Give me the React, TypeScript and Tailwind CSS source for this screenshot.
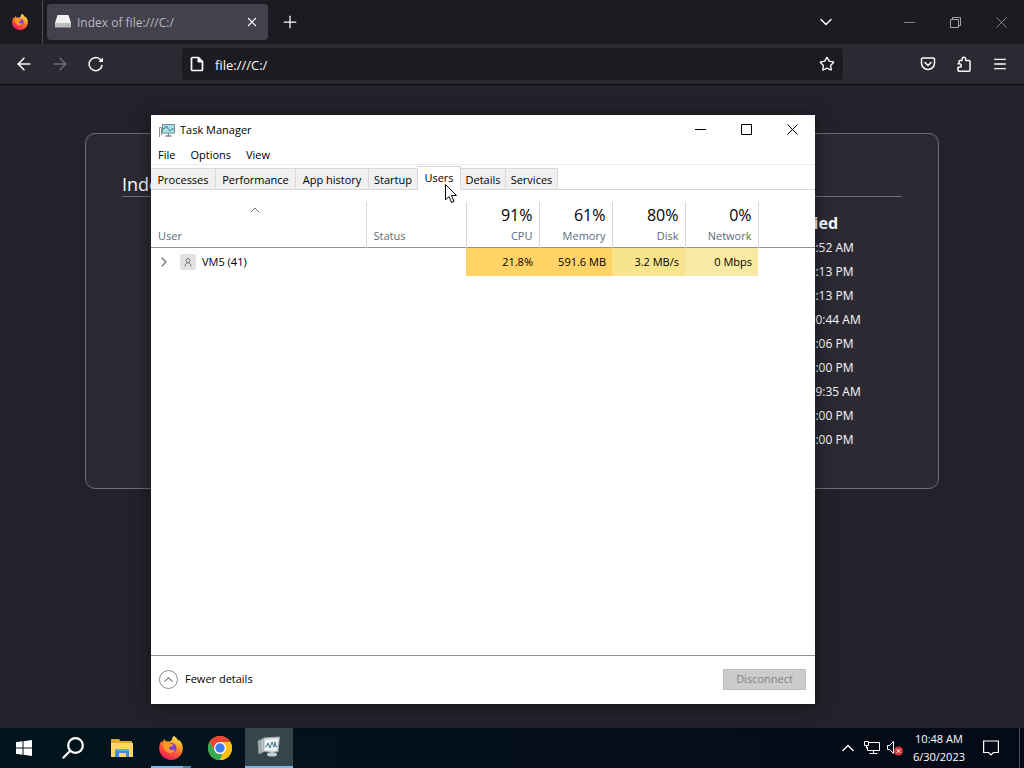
import React from 'react'
import { ArrowLeft, ArrowRight, Plus, ChevronDown, ChevronUp, ChevronRight, Star, Menu } from 'lucide-react'

const times = [
  '3:52 AM',
  '7:13 PM',
  '7:13 PM',
  '00:44 AM',
  '5:06 PM',
  '0:00 PM',
  '19:35 AM',
  '0:00 PM',
  '0:00 PM',
]

const tabs = [
  { name: 'Processes', className: 'w-[65px]' },
  { name: 'Performance', className: 'w-20' },
  { name: 'App history', className: 'w-[73px]' },
  { name: 'Startup', className: 'w-[49px]' },
  { name: 'Users', className: 'w-[43px]' },
  { name: 'Details', className: 'w-[45px]' },
  { name: 'Services', className: 'w-[52px]' },
]

const meters = [
  { name: 'CPU', total: '91%', value: '21.8%', className: 'bg-[#ffd366]' },
  { name: 'Memory', total: '61%', value: '591.6 MB', className: 'bg-[#ffd366]' },
  { name: 'Disk', total: '80%', value: '3.2 MB/s', className: 'bg-[#f9e48e]' },
  { name: 'Network', total: '0%', value: '0 Mbps', className: 'bg-[#f8eaa5]' },
]

function FirefoxLogo({ className }: { className?: string }) {
  return (
    <svg viewBox="0 0 24 24" className={className} aria-hidden="true">
      <defs>
        <linearGradient id="fox" x1="0.8" y1="0" x2="0.3" y2="1">
          <stop offset="0" stopColor="#fff04a" />
          <stop offset="0.35" stopColor="#ffa326" />
          <stop offset="0.65" stopColor="#ff5238" />
          <stop offset="1" stopColor="#e5195e" />
        </linearGradient>
      </defs>
      <path
        fill="url(#fox)"
        d="M15 0c2 1 3.600 3 4.300 5 .4-.3.500-.8.500-1.200C22.500 6 24 9.300 23.800 13c-.4 6.300-5.500 11-11.800 11S.3 19 .2 12.800C.1 9.500 1 7 2.700 5c0 .7.100 1.200.4 1.700C4 5 4.800 3.800 6 3c0 1 .3 1.800.8 2.500C8 5.200 9.500 5.200 10.500 5.700 12 5 12.800 4 13 3c.2-1.200.9-2.300 2-3z"
      />
      <circle cx="12.500" cy="12" r="5" fill="#7a42d8" />
      <path fill="#ff9a1f" d="M4 8c2-1.500 5-1.800 7-.5 1.500.8 2.500 1 3.500 1-.5 1.700-2 1.900-3.500 2.500-1.300.5-1 2.500.5 3 1.700.6 3-.5 4.300 0-1 2.500-3.300 3.500-5.800 3C6.500 16.300 4.500 12.500 4 8z" />
    </svg>
  )
}

function ChromeLogo() {
  return (
    <svg viewBox="0 0 24 24" className="size-6" aria-hidden="true">
      <circle cx="12" cy="12" r="12" fill="#fbc116" />
      <path fill="#ea4335" d="M1.600 6A12 12 0 0 1 22.400 6H12L6.800 15z" />
      <path fill="#34a853" d="M1.600 6l5.200 9a6 6 0 0 0 7.500 2.500L12 24A12 12 0 0 1 1.600 6z" />
      <path fill="#fbc116" d="M12 6h10.400A12 12 0 0 1 12 24l5.200-9z" />
      <circle cx="12" cy="12" r="6" fill="#fff" />
      <circle cx="12" cy="12" r="4.700" fill="#3b7ded" />
    </svg>
  )
}

function FolderIcon() {
  return (
    <svg viewBox="0 0 22 18" className="h-[18px] w-[22px]" aria-hidden="true">
      <path d="M0 0h8l1.500 2H21v16H0z" fill="#e3a92e" />
      <path d="M0 4h22v14H0z" fill="#ffd766" />
      <path d="M4 10h14v8h-3v-4H8v4H4z" fill="#3f8fc9" />
      <path d="M4 10h14v2H4z" fill="#62aede" />
    </svg>
  )
}

function MonitorIcon() {
  return (
    <svg viewBox="0 0 16 16" className="size-4" fill="none" aria-hidden="true">
      <path d="M.5 15V5.500h2M2.500 6v7" stroke="#8b9294" />
      <rect x="3.500" y="2.500" width="12" height="8.500" fill="#a9e3ec" stroke="#7c898c" />
      <path d="M4 7l2-1 1.500-2 2 3.500L11 9l2-2.500 2 1" stroke="#32727f" />
      <path d="M9.500 11v2.500M6.500 14h6" stroke="#858d90" strokeWidth="1.500" />
    </svg>
  )
}

function TaskManagerIcon() {
  return (
    <svg viewBox="0 0 24 24" className="size-6" fill="none" aria-hidden="true">
      <path d="M1 6l5-2v13l-4 2z" fill="#a9b1b4" stroke="#8f999d" />
      <path d="M4 4.500l3-1v13l-3 1z" fill="#c3cacd" stroke="#8f999d" />
      <path d="M7 3l15.500-1L21 16.500l-6 1L6 16z" fill="#d8dfe1" stroke="#a2abae" />
      <path d="M8 5l13-1-1 11-12 .5z" fill="#edf3f4" />
      <path d="M8 12l2-1 1-3 2 5 2-6 2 5 1-5 1 5 1.500-1" stroke="#447e94" />
      <ellipse cx="15" cy="19.500" rx="5" ry="2" fill="#c8cfd0" />
    </svg>
  )
}

function WindowControl({ kind, className = '' }: { kind: 'Minimize' | 'Maximize' | 'Restore' | 'Close'; className?: string }) {
  return (
    <button aria-label={kind} className={`flex w-[46px] justify-center ${className}`}>
      <svg viewBox="0 0 11 11" className="size-[11px]" fill="none" stroke="currentColor" aria-hidden="true">
        {kind === 'Minimize' && <path d="M0 5.500h11" />}
        {kind === 'Maximize' && <path d="M.5.500h10v10H.5z" />}
        {kind === 'Restore' && <path d="M.5 2.500h8v8h-8zM2.500 2.500v-2h8v8h-2" />}
        {kind === 'Close' && <path d="M.5.500l10 10M10.500.500l-10 10" />}
      </svg>
    </button>
  )
}

function BrowserHeader() {
  return (
    <header className="text-[#fbfbfe]">
      <div className="flex h-11 items-center bg-[#1c1b22]">
        <div className="flex h-11 w-[43px] items-center border-r border-[#4c4b55] pl-3">
          <FirefoxLogo className="size-4" />
        </div>
        <div className="ml-1 flex h-9 w-[221px] items-center rounded bg-[#42414d] px-2">
          <svg viewBox="0 0 16 16" className="size-4" aria-hidden="true">
            <path d="M2.500 1h11L16 9H0z" fill="#f1f1f3" />
            <path d="M0 9h16v4.500H0z" fill="#bcbcc1" />
            <path d="M12 11.500h2" stroke="#65c174" />
          </svg>
          <span className="ml-[6px] flex-1 pt-0.5 text-xs text-[#bab9c2]">Index of file:///C:/</span>
          <button aria-label="Close tab" className="mr-1">
            <svg viewBox="0 0 8 8" className="size-2 overflow-visible" stroke="currentColor" strokeWidth="1.200" aria-hidden="true">
              <path d="M0 0l8 8M8 0L0 8" />
            </svg>
          </button>
        </div>
        <button aria-label="New tab" className="ml-3"><Plus className="size-5" strokeWidth={1.5} /></button>
        <div className="ml-auto flex items-center">
          <button aria-label="List all tabs" className="mr-[50px]"><ChevronDown className="size-5" strokeWidth={1.8} /></button>
          <WindowControl kind="Minimize" className="text-[#85848b]" />
          <WindowControl kind="Restore" className="text-[#a3a2a8]" />
          <WindowControl kind="Close" className="text-[#85848b]" />
        </div>
      </div>
      <div className="flex h-[41px] items-center border-b border-[#0c0c0d] bg-[#2b2a33] pr-4 pl-[14px]">
        <button aria-label="Back"><ArrowLeft className="size-5" strokeWidth={1.8} /></button>
        <button aria-label="Forward" className="ml-4 text-[#6d6c74]"><ArrowRight className="size-5" strokeWidth={1.8} /></button>
        <button aria-label="Reload" className="ml-[18px]">
          <svg viewBox="0 0 16 16" className="size-4" fill="none" stroke="currentColor" strokeWidth="1.500" strokeLinecap="round" aria-hidden="true">
            <path d="M14 9.500A6.500 6.500 0 1 1 12 3.300l1.500 1.500" />
            <path d="M15 1.500V6h-4.500z" fill="currentColor" stroke="none" />
          </svg>
        </button>
        <div className="mr-[77px] ml-[78px] flex h-8 flex-1 items-center rounded bg-[#1c1b22] px-2">
          <svg viewBox="0 0 14 16" className="h-4 w-[14px]" fill="none" stroke="currentColor" strokeWidth="1.700" strokeLinejoin="round" aria-hidden="true">
            <path d="M2.500 1.500h6l4 4v8a1 1 0 0 1-1 1h-9a1 1 0 0 1-1-1v-11a1 1 0 0 1 1-1z" />
            <path d="M8 1.500v4.500h4.500z" fill="currentColor" strokeWidth="1" />
          </svg>
          <input aria-label="Address" className="ml-[11px] min-w-0 flex-1 bg-transparent pt-1 text-[13px] outline-none" defaultValue="file:///C:/" />
          <button aria-label="Bookmark"><Star className="size-4 overflow-visible" strokeWidth={2} /></button>
        </div>
        <button aria-label="Pocket">
          <svg viewBox="0 0 16 16" className="size-4" fill="none" stroke="currentColor" strokeWidth="1.500" strokeLinecap="round" aria-hidden="true">
            <path d="M1.500 3a1 1 0 0 1 1-1h11a1 1 0 0 1 1 1v4a6.500 6.500 0 0 1-13 0z" />
            <path d="M5 6.500l3 3 3-3" />
          </svg>
        </button>
        <button aria-label="Extensions" className="ml-5">
          <svg viewBox="0 0 16 16" className="size-4" fill="none" stroke="currentColor" strokeWidth="1.500" strokeLinejoin="round" aria-hidden="true">
            <path d="M3 15.200h10a1 1 0 0 0 1-1V5.500a1 1 0 0 0-1-1H9.700V2.800a1.900 1.900 0 0 0-3.700 0v1.700H4a1 1 0 0 0-1 1v2.200H1.500M1.500 7.700h2a1.700 1.700 0 0 1 0 3.500H2v3a1 1 0 0 0 1 1" />
          </svg>
        </button>
        <button aria-label="Menu" className="ml-5"><Menu className="size-4 overflow-visible" strokeWidth={2} /></button>
      </div>
    </header>
  )
}

function DirectoryPage() {
  return (
    <main className="flex-1 px-[85px] pt-12 text-[#fbfbfe]">
      <div className="rounded-[10px] border border-[#6f6e78] bg-[#2b2a33] px-9 pt-10 pb-[37px]">
        <h1 className="border-b border-[#6f6e78] pb-0.5 text-lg leading-5">Index of file:///C:/</h1>
        <table className="mt-[14px] ml-auto text-xs">
          <thead>
            <tr>
              <th className="h-6 pr-16 text-right text-base leading-6">Last Modified</th>
            </tr>
          </thead>
          <tbody>
            {times.map((time, i) => (
              <tr key={i}>
                <td className="h-6 pt-px pl-[79px]">{time}</td>
              </tr>
            ))}
          </tbody>
        </table>
      </div>
    </main>
  )
}

function TaskManager() {
  const [active, setActive] = React.useState('Users')

  return (
    <section className="absolute top-[115px] left-[151px] flex h-[589px] w-[664px] flex-col bg-white text-[11px] text-black shadow-[0_2px_16px_rgba(0,0,0,0.5)]">
      <div className="flex h-[29px] items-center pl-2">
        <MonitorIcon />
        <h2 className="ml-[5px] flex-1 pt-0.5">Task Manager</h2>
        <WindowControl kind="Minimize" />
        <WindowControl kind="Maximize" />
        <WindowControl kind="Close" />
      </div>
      <nav className="flex h-[21px] items-center gap-[15px] border-b border-[#ececec] pt-0.5 pl-[7px]">
        <button>File</button>
        <button>Options</button>
        <button>View</button>
      </nav>
      <div className="flex h-[25px] items-end border-b border-[#d9d9d9]">
        {tabs.map((tab) => (
          <button
            key={tab.name}
            onClick={() => setActive(tab.name)}
            className={`flex items-center justify-center border-t border-r border-[#d9d9d9] whitespace-nowrap ${tab.className} ${
              active === tab.name ? '-mb-px h-6 bg-white' : 'h-[21px] bg-[#f0f0f0] pt-0.5'
            }`}
          >
            {tab.name}
          </button>
        ))}
      </div>
      <table className="mt-3 w-full table-fixed border-collapse">
        <thead>
          <tr className="h-11 border-b border-[#8f9395] leading-5 text-[#5b6b7b]">
            <th className="w-[215px] border-r border-[#d5d9dc] pr-[14px] pb-px pl-[7px] text-left align-bottom font-normal">
              <ChevronUp className="mx-auto mb-2 size-4 text-[#777]" strokeWidth={1.5} />
              User
            </th>
            <th className="w-[100px] border-r border-[#d5d9dc] pb-px pl-[7px] text-left align-bottom font-normal">Status</th>
            {meters.map((m) => (
              <th key={m.name} className="w-[73px] border-r border-[#d5d9dc] pr-[6px] pb-px text-right align-bottom font-normal">
                <span className="block text-base leading-[21px] text-black">{m.total}</span>
                {m.name}
              </th>
            ))}
            <th />
          </tr>
        </thead>
        <tbody>
          <tr className="h-7">
            <td>
              <div className="flex items-center pl-[5px]">
                <ChevronRight className="size-4 text-[#777]" strokeWidth={2} />
                <svg viewBox="0 0 16 16" className="mx-2 size-4" fill="none" stroke="#777" aria-hidden="true">
                  <rect width="16" height="16" rx="1" fill="#e2e2e2" stroke="none" />
                  <circle cx="8" cy="6.500" r="2" />
                  <path d="M5 12.500c0-5 6-5 6 0" />
                </svg>
                <span className="-ml-0.5">VM5 (41)</span>
              </div>
            </td>
            <td />
            {meters.map((m) => (
              <td key={m.name} className={`pr-[6px] text-right ${m.className}`}>{m.value}</td>
            ))}
            <td />
          </tr>
        </tbody>
      </table>
      <footer className="mt-auto flex h-[49px] items-center border-t border-[#8f9395] pr-[9px] pb-px pl-2">
        <button className="flex items-center gap-[7px]">
          <ChevronUp className="size-[19px] rounded-full border border-[#8b8b8b] p-px text-[#777]" strokeWidth={1.8} />
          Fewer details
        </button>
        <button disabled className="ml-auto h-[21px] w-[83px] border border-[#bfbfbf] bg-[#cccccc] text-[#838383]">Disconnect</button>
      </footer>
    </section>
  )
}

function Cursor() {
  return (
    <svg viewBox="0 0 12 20" className="absolute top-[184px] left-[445px] h-5 w-3 overflow-visible" fill="#fff" stroke="#000" aria-hidden="true">
      <path d="M.5.500v15.500l3.500-3.500 2.500 6 2.500-1-2.500-6h5z" />
    </svg>
  )
}

function TaskbarButton({ label, className = '', children }: { label: string; className?: string; children: React.ReactNode }) {
  return (
    <button aria-label={label} className={`flex h-10 w-12 items-center justify-center ${className}`}>
      {children}
    </button>
  )
}

function Taskbar() {
  return (
    <footer className="flex h-10 items-center bg-linear-to-r from-[#02151c] to-[#050a17] text-white">
      <div className="flex gap-px">
        <TaskbarButton label="Start">
          <svg viewBox="0 0 16 16" className="size-4" fill="currentColor" aria-hidden="true">
            <path d="M0 2.200l6.500-.9v6.200H0zM7.500 1.200L16 0v7.500H7.500zM0 8.500h6.500v6.200L0 13.800zM7.500 8.500H16V16l-8.500-1.200z" />
          </svg>
        </TaskbarButton>
        <TaskbarButton label="Search">
          <svg viewBox="0 0 22 22" className="size-[22px]" fill="none" stroke="currentColor" strokeWidth="2.200" aria-hidden="true">
            <circle cx="13.500" cy="8.500" r="7.300" />
            <path d="M8.500 13.500L.8 21.200" />
          </svg>
        </TaskbarButton>
        <TaskbarButton label="File Explorer"><FolderIcon /></TaskbarButton>
        <TaskbarButton label="Firefox" className="relative">
          <FirefoxLogo className="size-6" />
          <span className="absolute inset-x-1 bottom-0 h-0.5 border-r-8 border-[#4f7ea3] bg-[#76b9ed]" />
        </TaskbarButton>
        <TaskbarButton label="Chrome"><ChromeLogo /></TaskbarButton>
        <TaskbarButton label="Task Manager" className="border-b-2 border-[#76b9ed] bg-[#35454c]"><TaskManagerIcon /></TaskbarButton>
      </div>
      <div className="ml-auto flex items-center">
        <button aria-label="Show hidden icons">
          <svg viewBox="0 0 12 8" className="h-2 w-3" fill="none" stroke="currentColor" strokeWidth="1.300" aria-hidden="true">
            <path d="M.5 7L6 1.500 11.500 7" />
          </svg>
        </button>
        <button aria-label="Network" className="ml-[10px]">
          <svg viewBox="0 0 16 14" className="h-[14px] w-4" fill="none" stroke="currentColor" aria-hidden="true">
            <path d="M5 1.500h10.500v8H3.500V6M9.500 9.500v3M5.500 12.500h8" />
            <path d="M.5.500h4v4h-4zM2.500 4.500v3" />
          </svg>
        </button>
        <button aria-label="Volume" className="ml-[7px]">
          <svg viewBox="0 0 16 16" className="size-4" fill="none" stroke="currentColor" aria-hidden="true">
            <path d="M.5 5.500h2l4-4v12l-4-4h-2z" />
            <circle cx="11.500" cy="11" r="4.500" fill="#cf3b3b" stroke="none" />
            <path d="M9.700 9.200l3.600 3.600M13.300 9.200l-3.600 3.600" />
          </svg>
        </button>
        <div className="ml-[10px] text-center text-[11px] leading-[18px]">
          <div>10:48 AM</div>
          <div>6/30/2023</div>
        </div>
        <button aria-label="Notifications" className="ml-[18px]">
          <svg viewBox="0 0 16 16" className="size-4" fill="none" stroke="currentColor" strokeWidth="1.200" aria-hidden="true">
            <path d="M.6 1h14.800v11.500h-5L8 15l-2.400-2.500h-5z" />
          </svg>
        </button>
        <div className="mr-1 ml-5 h-10 w-px bg-[#4b505a]" />
      </div>
    </footer>
  )
}

export default function App() {
  return (
    <div className="relative flex min-h-screen flex-col overflow-hidden bg-[#23222b] font-['Open_Sans',sans-serif]">
      <BrowserHeader />
      <DirectoryPage />
      <TaskManager />
      <Cursor />
      <Taskbar />
    </div>
  )
}
